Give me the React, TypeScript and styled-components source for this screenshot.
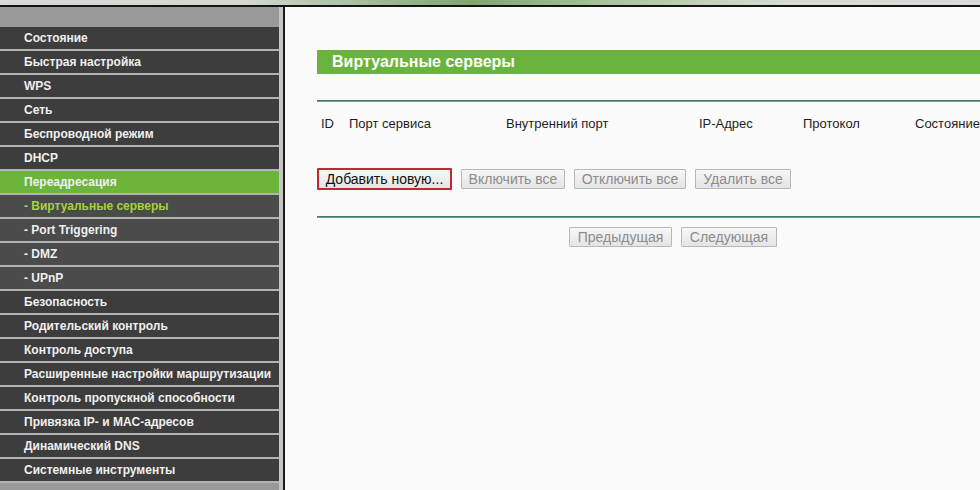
import styled, { createGlobalStyle } from "styled-components";

const GlobalStyle = createGlobalStyle`
    html, body {
        margin: 0;
        padding: 0;
        width: 980px;
        height: 490px;
        overflow: hidden;
        background: #fbfbfb;
        font-family: "Liberation Sans", Arial, sans-serif;
    }
`

const TopStrip = styled.div`
    height: 5px;
    background: linear-gradient(90deg, #dadada 0%, #d4d8d0 25%, #7fa56f 48%, #a9c49b 62%, #d8dcd4 80%, #dadada 100%);
    border-bottom: 2px solid #141414;
`

const Main = styled.div`
    display: flex;
    height: 483px;
`

const SideWrap = styled.div`
    display: flex;
    background: #c6c6c6;
    padding-right: 4px;
    border-right: 2px solid #1c1c1c;
`

const Nav = styled.ul`
    width: 279px;
    margin: 0;
    padding: 20px 0 0 0;
    list-style: none;
    background: #999999;
`

type ItemKind = "main" | "active" | "sub" | "subActive";

const MenuItem = styled.li<{ $kind: ItemKind }>`
    height: 22px;
    line-height: 22px;
    padding-left: 24px;
    border-bottom: 2px solid #b3b3b3;
    font-size: 12px;
    font-weight: bold;
    white-space: nowrap;
    background: ${p => p.$kind === "active" ? "#6cb53a" : (p.$kind === "sub" || p.$kind === "subActive") ? "#4b4b4b" : "#3d3d3d"};
    color: ${p => p.$kind === "subActive" ? "#a6d23c" : "#efefef"};
`

const Content = styled.div`
    flex: 1;
    min-width: 0;
    background: #fbfbfb;
    padding: 43px 0 0 32px;
`

const TitleBar = styled.div`
    height: 24px;
    line-height: 24px;
    background: #6ab43d;
    color: #ffffff;
    font-size: 16px;
    font-weight: bold;
    padding-left: 15px;
`

const Divider = styled.div<{ $top: number }>`
    margin-top: ${p => p.$top}px;
    height: 2px;
    background: linear-gradient(#2d6652, #8fb0a2);
`

const HeaderRow = styled.div`
    display: grid;
    grid-template-columns: 28px 157px 193px 104px 112px auto;
    padding: 14px 0 0 4px;
    height: 16px;
    line-height: 16px;
    font-size: 13px;
    color: #1e1e1e;
    white-space: nowrap;
`

const ButtonRow = styled.div<{ $top: number; $left: number }>`
    display: flex;
    align-items: center;
    gap: 9px;
    margin-top: ${p => p.$top}px;
    padding-left: ${p => p.$left}px;
`

const Button = styled.button<{ $primary?: boolean; $width: number }>`
    box-sizing: border-box;
    width: ${p => p.$width}px;
    height: ${p => p.$primary ? 22 : 20}px;
    padding: 0;
    font-family: "Liberation Sans", Arial, sans-serif;
    font-size: 14px;
    color: ${p => p.$primary ? "#111111" : "#8c8c8c"};
    background: linear-gradient(#f7f7f7, #e4e4e4);
    border: ${p => p.$primary ? "2px solid #c62631" : "1px solid #b8b8b8"};
    border-radius: 1px;
`

const menu: { text: string; kind: ItemKind }[] = [
    { text: "Состояние", kind: "main" },
    { text: "Быстрая настройка", kind: "main" },
    { text: "WPS", kind: "main" },
    { text: "Сеть", kind: "main" },
    { text: "Беспроводной режим", kind: "main" },
    { text: "DHCP", kind: "main" },
    { text: "Переадресация", kind: "active" },
    { text: "- Виртуальные серверы", kind: "subActive" },
    { text: "- Port Triggering", kind: "sub" },
    { text: "- DMZ", kind: "sub" },
    { text: "- UPnP", kind: "sub" },
    { text: "Безопасность", kind: "main" },
    { text: "Родительский контроль", kind: "main" },
    { text: "Контроль доступа", kind: "main" },
    { text: "Расширенные настройки маршрутизации", kind: "main" },
    { text: "Контроль пропускной способности", kind: "main" },
    { text: "Привязка IP- и MAC-адресов", kind: "main" },
    { text: "Динамический DNS", kind: "main" },
    { text: "Системные инструменты", kind: "main" },
];

const columns = ["ID", "Порт сервиса", "Внутренний порт", "IP-Адрес", "Протокол", "Состояние"];

function App() {
    return <>
        <GlobalStyle />
        <TopStrip />
        <Main>
            <SideWrap>
                <Nav>
                    {menu.map(item => <MenuItem key={item.text} $kind={item.kind}>{item.text}</MenuItem>)}
                </Nav>
            </SideWrap>
            <Content>
                <TitleBar>Виртуальные серверы</TitleBar>
                <Divider $top={26} />
                <HeaderRow>
                    {columns.map(col => <span key={col}>{col}</span>)}
                </HeaderRow>
                <ButtonRow $top={36} $left={0}>
                    <Button $primary $width={135}>Добавить новую...</Button>
                    <Button $width={104}>Включить все</Button>
                    <Button $width={112}>Отключить все</Button>
                    <Button $width={96}>Удалить все</Button>
                </ButtonRow>
                <Divider $top={26} />
                <ButtonRow $top={9} $left={252}>
                    <Button $width={103}>Предыдущая</Button>
                    <Button $width={96}>Следующая</Button>
                </ButtonRow>
            </Content>
        </Main>
    </>;
}

export default App;
